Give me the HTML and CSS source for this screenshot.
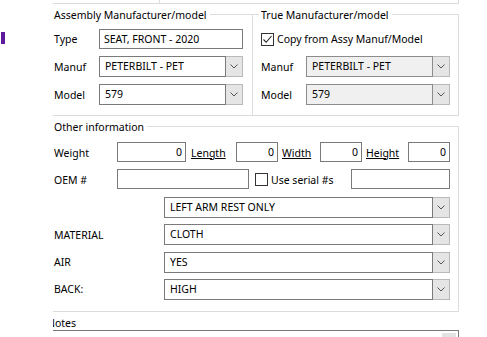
FILE: index.html
```html
<!DOCTYPE html>
<html lang="en">
<head>
    <meta charset="UTF-8">
    <meta name="viewport" content="width=device-width, initial-scale=1.0">
    <title>Seat details</title>
    <link rel="stylesheet" href="styles.css">
</head>
<body>
    <div class="app">
        <div class="gutter"><div class="marker"></div></div>
        <div class="viewport">
            <div class="sheet">
                <div class="top-strip"><div class="top-strip-cell"></div></div>

                <div class="pair">
                    <div class="group group-assy">
                        <div class="legend">Assembly Manufacturer/model</div>
                        <div class="rows">
                            <div class="row row-text">
                                <span class="label">Type</span>
                                <input class="textbox w-144" type="text" value="SEAT, FRONT - 2020">
                            </div>
                            <div class="row">
                                <span class="label">Manuf</span>
                                <div class="combo w-144">
                                    <div class="combo-text">PETERBILT - PET</div>
                                    <div class="combo-btn"><svg width="8" height="5" viewBox="0 0 8 5"><polyline points="0.5,0.5 4,4 7.5,0.5" fill="none" stroke="#555" stroke-width="1"/></svg></div>
                                </div>
                            </div>
                            <div class="row">
                                <span class="label">Model</span>
                                <div class="combo w-144">
                                    <div class="combo-text">579</div>
                                    <div class="combo-btn"><svg width="8" height="5" viewBox="0 0 8 5"><polyline points="0.5,0.5 4,4 7.5,0.5" fill="none" stroke="#555" stroke-width="1"/></svg></div>
                                </div>
                            </div>
                        </div>
                    </div>

                    <div class="group group-true">
                        <div class="legend">True Manufacturer/model</div>
                        <div class="rows">
                            <div class="row row-text">
                                <span class="checkbox checked"><svg width="11" height="11" viewBox="0 0 11 11"><polyline points="1.5,5.5 4.2,8.3 9.5,2" fill="none" stroke="#222" stroke-width="1.1"/></svg></span>
                                <span class="check-label">Copy from Assy Manuf/Model</span>
                            </div>
                            <div class="row">
                                <span class="label">Manuf</span>
                                <div class="combo combo-disabled w-144">
                                    <div class="combo-text">PETERBILT - PET</div>
                                    <div class="combo-btn"><svg width="8" height="5" viewBox="0 0 8 5"><polyline points="0.5,0.5 4,4 7.5,0.5" fill="none" stroke="#555" stroke-width="1"/></svg></div>
                                </div>
                            </div>
                            <div class="row">
                                <span class="label">Model</span>
                                <div class="combo combo-disabled w-144">
                                    <div class="combo-text">579</div>
                                    <div class="combo-btn"><svg width="8" height="5" viewBox="0 0 8 5"><polyline points="0.5,0.5 4,4 7.5,0.5" fill="none" stroke="#555" stroke-width="1"/></svg></div>
                                </div>
                            </div>
                        </div>
                    </div>
                </div>

                <div class="group group-other">
                    <div class="legend">Other information</div>
                    <div class="rows rows-other">
                        <div class="row">
                            <span class="label label-wide">Weight</span>
                            <input class="textbox num w-69" type="text" value="0">
                            <span class="link-label w-50">Length</span>
                            <input class="textbox num w-42" type="text" value="0">
                            <span class="link-label w-42">Width</span>
                            <input class="textbox num w-42" type="text" value="0">
                            <span class="link-label w-46">Height</span>
                            <input class="textbox num w-42" type="text" value="0">
                        </div>
                        <div class="row">
                            <span class="label label-wide">OEM #</span>
                            <input class="textbox w-132" type="text" value="">
                            <span class="checkbox serial-box"></span>
                            <span class="check-label serial-label">Use serial #s</span>
                            <input class="textbox w-99" type="text" value="">
                        </div>
                        <div class="row">
                            <span class="label label-combo"></span>
                            <div class="combo combo-fill">
                                <div class="combo-text">LEFT ARM REST ONLY</div>
                                <div class="combo-btn"><svg width="8" height="5" viewBox="0 0 8 5"><polyline points="0.5,0.5 4,4 7.5,0.5" fill="none" stroke="#555" stroke-width="1"/></svg></div>
                            </div>
                        </div>
                        <div class="row">
                            <span class="label label-combo">MATERIAL</span>
                            <div class="combo combo-fill">
                                <div class="combo-text">CLOTH</div>
                                <div class="combo-btn"><svg width="8" height="5" viewBox="0 0 8 5"><polyline points="0.5,0.5 4,4 7.5,0.5" fill="none" stroke="#555" stroke-width="1"/></svg></div>
                            </div>
                        </div>
                        <div class="row">
                            <span class="label label-combo">AIR</span>
                            <div class="combo combo-fill">
                                <div class="combo-text">YES</div>
                                <div class="combo-btn"><svg width="8" height="5" viewBox="0 0 8 5"><polyline points="0.5,0.5 4,4 7.5,0.5" fill="none" stroke="#555" stroke-width="1"/></svg></div>
                            </div>
                        </div>
                        <div class="row">
                            <span class="label label-combo">BACK:</span>
                            <div class="combo combo-fill">
                                <div class="combo-text">HIGH</div>
                                <div class="combo-btn"><svg width="8" height="5" viewBox="0 0 8 5"><polyline points="0.5,0.5 4,4 7.5,0.5" fill="none" stroke="#555" stroke-width="1"/></svg></div>
                            </div>
                        </div>
                    </div>
                </div>

                <div class="notes-label">Notes</div>
                <div class="notes-box"><div class="notes-scroll"></div></div>
            </div>
        </div>
    </div>
</body>
</html>
```

FILE: styles.css
```css
body {
    margin: 0;
    background-color: #ffffff;
    font-family: "Noto Sans", sans-serif;
    font-size: 10.5px;
    color: #000000;
}
.app {
    display: flex;
}
.gutter {
    width: 53px;
    flex: none;
}
.marker {
    width: 4px;
    height: 12px;
    margin: 32px 0 0 1px;
    background-color: #5e1a9c;
}
.viewport {
    width: 406px;
    height: 337px;
    overflow: hidden;
    flex: none;
}
.sheet {
    width: 413px;
    margin-left: -7px;
}
.top-strip {
    box-sizing: border-box;
    width: 413px;
    height: 4px;
    border-bottom: 1px solid #dcdcdc;
    border-right: 1px solid #dcdcdc;
}
.top-strip-cell {
    box-sizing: border-box;
    width: 114px;
    height: 3px;
    border-right: 1px solid #dcdcdc;
}
.pair {
    display: flex;
    margin-top: 10px;
}
.group {
    box-sizing: border-box;
    border: 1px solid #dcdcdc;
}
.group-assy {
    width: 206px;
    border-right: none;
    padding: 0 0 10px 7px;
}
.group-true {
    width: 207px;
    padding: 0 8px 10px 8px;
}
.group-other {
    margin-top: 10px;
    padding: 0 8px 11px 7px;
}
.legend {
    width: fit-content;
    height: 16px;
    line-height: 16px;
    margin: -8px 0 0 -2px;
    padding: 0 3px 0 2px;
    background-color: #ffffff;
}
.rows {
    display: flex;
    flex-direction: column;
    gap: 7px;
    margin-top: 6px;
}
.rows-other {
    gap: 6.4px;
    margin-top: 7px;
}
.row {
    display: flex;
    align-items: center;
    height: 21px;
}
.row-text {
    height: 20px;
}
.rows-other .row .textbox {
    align-self: flex-start;
}
.label {
    width: 45px;
    flex: none;
}
.label-wide {
    width: 63px;
}
.label-combo {
    width: 110px;
}
.link-label {
    flex: none;
    box-sizing: border-box;
    padding-left: 4px;
    text-decoration: underline;
}
.link-label.w-50 {
    padding-left: 5px;
}
.textbox {
    box-sizing: border-box;
    height: 20px;
    margin: 0;
    padding: 0 4px;
    border: 1px solid #7a7a7a;
    border-radius: 0;
    font-family: inherit;
    font-size: inherit;
    color: #000000;
    background-color: #ffffff;
    outline: none;
    flex: none;
}
.textbox.num {
    text-align: right;
    padding-right: 3px;
}
.w-144 { width: 144px; }
.w-132 { width: 132px; }
.w-99 { width: 99px; }
.w-69 { width: 69px; }
.w-50 { width: 50px; }
.w-46 { width: 46px; }
.w-42 { width: 42px; }
.combo {
    display: flex;
    height: 21px;
    flex: none;
}
.combo-fill {
    flex: 1;
}
.combo-text {
    flex: 1;
    box-sizing: border-box;
    border: 1px solid #7a7a7a;
    padding-left: 5px;
    line-height: 19px;
    background-color: #ffffff;
}
.combo-btn {
    box-sizing: border-box;
    width: 17px;
    display: flex;
    justify-content: center;
    align-items: center;
    background-color: #e5e5e5;
    border: 1px solid #b9b9b9;
    border-left: none;
}
.combo-disabled .combo-text {
    background-color: #f0f0f0;
    border-color: #8c8c8c;
}
.checkbox {
    box-sizing: border-box;
    width: 13px;
    height: 13px;
    border: 1px solid #333333;
    background-color: #ffffff;
    display: flex;
    justify-content: center;
    align-items: center;
    flex: none;
}
.check-label {
    margin-left: 3px;
}
.serial-box {
    margin-left: 6px;
}
.serial-label {
    flex: 1;
}
.notes-label {
    height: 13px;
    line-height: 13px;
    margin-top: 5px;
    padding-left: 1px;
}
.notes-box {
    box-sizing: border-box;
    width: 413px;
    height: 40px;
    border: 1px solid #7a7a7a;
    display: flex;
    justify-content: flex-end;
}
.notes-scroll {
    width: 14px;
    height: 20px;
    margin: 2px 2px 0 0;
    background-color: #e3e3e3;
}
```
